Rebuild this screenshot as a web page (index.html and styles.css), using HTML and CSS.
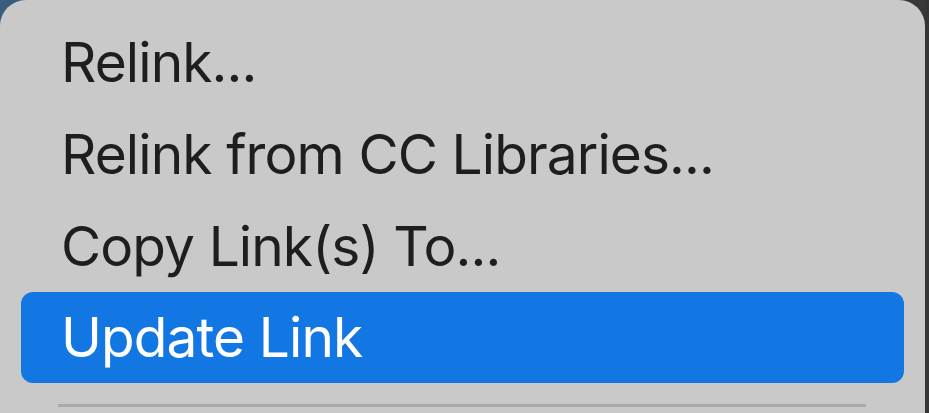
FILE: index.html
```html
<!DOCTYPE html>
<html>
<head>
<meta charset="utf-8">
<link rel="stylesheet" href="styles.css">
</head>
<body>
<div class="screen">
  <div class="menu">
    <div class="item">Relink...</div>
    <div class="item">Relink from CC Libraries...</div>
    <div class="item">Copy Link(s) To...</div>
    <div class="item selected">Update Link</div>
    <div class="separator"></div>
  </div>
  <div class="edge"></div>
</div>
</body>
</html>
```
FILE: styles.css
```css
html, body {
  margin: 0;
  padding: 0;
  width: 929px;
  height: 413px;
  overflow: hidden;
}
body {
  background: linear-gradient(90deg, #3a5d7e 0%, #3b4652 30%, #383838 100%);
}
.screen {
  display: flex;
  height: 413px;
  overflow: hidden;
}
.menu {
  width: 925px;
  height: 413px;
  overflow: hidden;
  background: #c9c9c9;
  border-radius: 26px 26px 0 0;
  padding-top: 16px;
  box-sizing: border-box;
  display: flex;
  flex-direction: column;
  font-family: Inter, "Liberation Sans", sans-serif;
  font-size: 55px;
  letter-spacing: -0.9px;
  color: #1e1e1e;
}
.edge {
  flex: 1;
  background: #353535;
}
.item {
  flex: none;
  height: 92px;
  line-height: 92px;
  margin: 0 21px;
  padding-left: 40px;
  white-space: nowrap;
}
.item.selected {
  background: #1277e3;
  color: #ffffff;
  border-radius: 12px;
  height: 91px;
  line-height: 91px;
}
.separator {
  flex: none;
  margin: 21px 0 0 58px;
  width: 808px;
  height: 3px;
  background: #aaaaaa;
}
```
